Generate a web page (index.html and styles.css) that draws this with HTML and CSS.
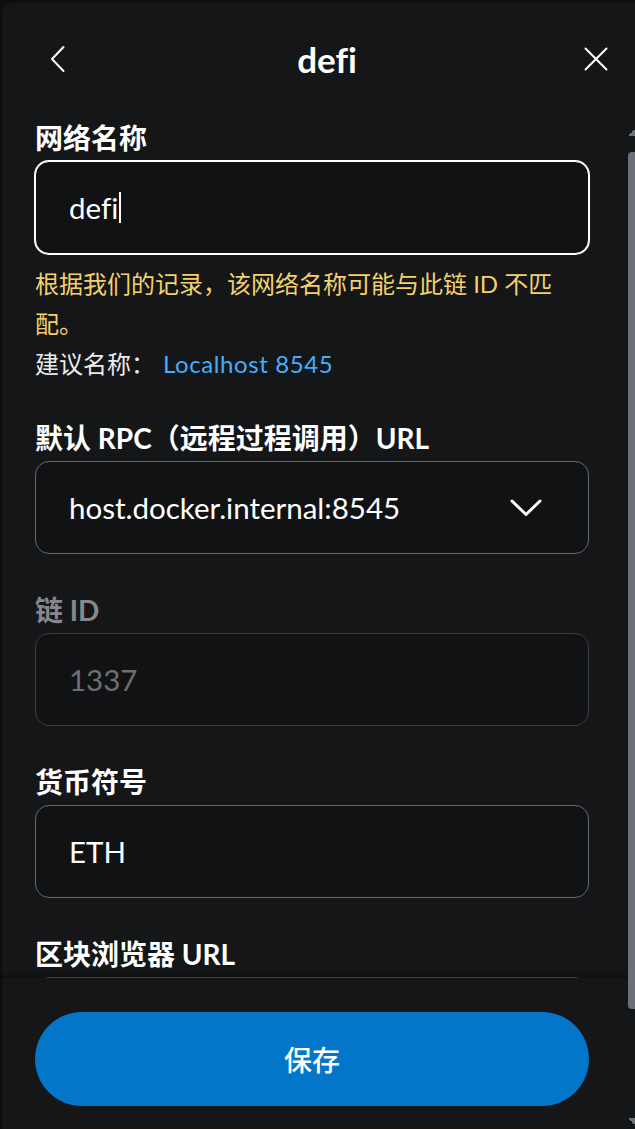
FILE: index.html
```html
<!DOCTYPE html>
<html lang="zh-CN">
<head>
<meta charset="utf-8">
<title>defi</title>
<link rel="stylesheet" href="styles.css">
</head>
<body>
<div class="modal">
  <header class="header">
    <button class="icon-btn" type="button" aria-label="返回">
      <svg class="icon-back" width="16" height="28" viewBox="0 0 16 28" fill="none"><path d="M13.5 2 L2 14 L13.5 26" stroke="#fff" stroke-width="2" stroke-linecap="round" stroke-linejoin="round"/></svg>
    </button>
    <h1 class="title">defi</h1>
    <button class="icon-btn" type="button" aria-label="关闭">
      <svg class="icon-close" width="26" height="26" viewBox="0 0 26 26" fill="none"><path d="M2.5 2.5 L23.5 23.5 M23.5 2.5 L2.5 23.5" stroke="#fff" stroke-width="2" stroke-linecap="round"/></svg>
    </button>
  </header>
  <div class="body">
    <div class="scroll">
      <form class="form">
        <div class="field field--help">
          <div class="label">网络名称</div>
          <div class="input input--focused"><span class="value">defi</span><span class="caret"></span></div>
          <div class="help">
            <p class="warning">根据我们的记录，该网络名称可能与此链 ID 不匹配。</p>
            <p class="suggest">建议名称：<a class="link">Localhost 8545</a></p>
          </div>
        </div>
        <div class="field">
          <div class="label">默认 RPC（远程过程调用）URL</div>
          <div class="input input--select">
            <span class="value">host.docker.internal:8545</span>
            <svg class="chevron" width="32" height="20" viewBox="0 0 32 20" fill="none"><path d="M2 3 L16 16.5 L30 3" stroke="#fff" stroke-width="3" stroke-linecap="round" stroke-linejoin="round"/></svg>
          </div>
        </div>
        <div class="field field--disabled">
          <div class="label">链 ID</div>
          <div class="input input--disabled"><span class="value">1337</span></div>
        </div>
        <div class="field">
          <div class="label">货币符号</div>
          <div class="input"><span class="value">ETH</span></div>
        </div>
        <div class="field field--last">
          <div class="label">区块浏览器 URL</div>
          <div class="input"><span class="value"></span></div>
        </div>
      </form>
      <footer class="footer">
        <button class="save" type="button">保存</button>
      </footer>
    </div>
    <div class="scrollbar" aria-hidden="true">
      <div class="sb-btn sb-up"></div>
      <div class="sb-track"><div class="sb-thumb"></div></div>
      <div class="sb-btn sb-down"></div>
    </div>
  </div>
</div>
</body>
</html>
```

FILE: styles.css
```css
html, body {
  margin: 0;
  padding: 0;
  height: 1129px;
  overflow: hidden;
  background: #0c0d0f;
}

body {
  font-family: "Lato", "Noto Sans CJK SC", sans-serif;
  font-variant-ligatures: none;
  color: #fff;
}

.modal {
  margin: 3px 0 0 2px;
  width: 633px;
  height: 1126px;
  background: #151618;
  border-radius: 10px 0 0 0;
  display: flex;
  flex-direction: column;
  overflow: hidden;
}

.header {
  flex: 0 0 auto;
  height: 119px;
  box-sizing: border-box;
  padding: 0 16px 8px 33px;
  display: flex;
  align-items: center;
  justify-content: space-between;
}

.icon-btn {
  width: 45px;
  height: 45px;
  padding: 0;
  border: 0;
  background: transparent;
  display: flex;
  align-items: center;
  justify-content: center;
}

.title {
  margin: 0;
  font-size: 35px;
  font-weight: 700;
  line-height: 40px;
  color: #fff;
  font-variant-ligatures: none;
}

.body {
  flex: 1 1 auto;
  min-height: 0;
  display: flex;
}

.scroll {
  flex: 1 1 auto;
  min-width: 0;
  overflow: hidden;
}

.scrollbar {
  flex: 0 0 7px;
  display: flex;
  flex-direction: column;
}

.sb-btn {
  flex: 0 0 15px;
  background-repeat: no-repeat;
  background-size: 7px 7px;
}

.sb-up {
  background-image: linear-gradient(to bottom right, transparent 50%, #6b7079 50%);
  background-position: 0 7px;
}

.sb-down {
  background-image: linear-gradient(to top right, transparent 50%, #6b7079 50%);
  background-position: 0 4px;
}

.sb-track {
  flex: 1 1 auto;
  padding-top: 15px;
}

.sb-thumb {
  height: 857px;
  background: #6b7079;
  border-radius: 4px 0 0 4px;
}

.form {
  padding: 1px 39px 0 33px;
}

.field {
  margin-bottom: 41px;
}

.field--help {
  margin-bottom: 39px;
}

.field--last {
  margin-bottom: 36px;
}

.label {
  font-size: 28px;
  font-weight: 700;
  line-height: 30px;
  margin-bottom: 8px;
  color: #fff;
}

.field--disabled .label {
  color: #85888c;
}

.input {
  height: 93px;
  box-sizing: border-box;
  border: 1px solid #626871;
  border-radius: 14px;
  background: #111214;
  padding: 0 46px 0 33px;
  display: flex;
  align-items: center;
  font-size: 29.5px;
  color: #fff;
}

.input--focused {
  border-color: #fff;
  box-shadow: 0 0 0 1px #fff;
}

.input--select {
  justify-content: space-between;
}

.input--disabled {
  border-color: #3b3e43;
  color: #6c6f73;
}

.caret {
  display: inline-block;
  width: 2px;
  height: 31px;
  margin-left: 1px;
  background: #fff;
}

.help {
  margin-top: 10px;
}

.warning,
.suggest {
  margin: 0;
  font-size: 24px;
  line-height: 40px;
}

.warning {
  color: #f4d16a;
}

.suggest {
  color: #ececec;
}

.link {
  margin-left: 8px;
  letter-spacing: 0.6px;
  color: #43aefc;
}

.footer {
  position: sticky;
  bottom: 0;
  background: #151618;
  padding: 34px 39px 23px 33px;
  box-shadow: 0 -2px 4px rgba(0, 0, 0, 0.45);
}

.save {
  display: block;
  width: 100%;
  height: 94px;
  border: 0;
  border-radius: 47px;
  background: #0376c9;
  color: #fff;
  font-family: "Lato", "Noto Sans CJK SC", sans-serif;
  font-size: 28px;
  font-weight: 500;
}
```
